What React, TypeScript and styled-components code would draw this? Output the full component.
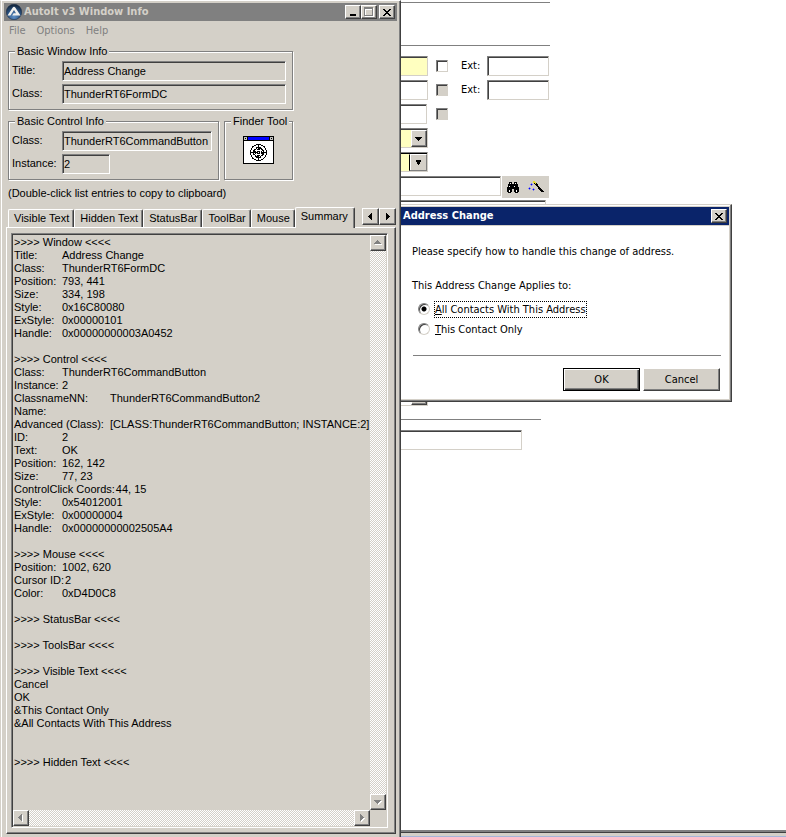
import React from "react";
import styled, { createGlobalStyle, css } from "styled-components";

const face = "#d4d0c8";
const shade = "#808080";
const dark = "#404040";
const sans = '"Liberation Sans", Arial, sans-serif';
const tahoma = '"DejaVu Sans Condensed", Tahoma, sans-serif';

const Global = createGlobalStyle`
  * { box-sizing: border-box; }
  html, body { margin: 0; padding: 0; background: #fff; }
  body, button, input, select, textarea { font: 11px/13px ${sans}; color: #000; }
  button, input, select, textarea, fieldset, legend { margin: 0; padding: 0; border-radius: 0; outline: none; }
  svg { display: block; flex: none; }
`;

const raised = css`
  border: 1px solid;
  border-color: #fff ${dark} ${dark} #fff;
  box-shadow: inset -1px -1px 0 ${shade};
  background: ${face};
`;

const Desktop = styled.div`
  display: grid;
  grid-template-columns: minmax(401px, 51%) minmax(0, 1fr);
  min-height: 100vh;
`;

/* ---------- AutoIt window ---------- */

const ToolWindow = styled.section`
  display: flex;
  flex-direction: column;
  min-width: 0;
  padding: 2px 3px 3px;
  background: ${face};
  border: solid;
  border-width: 1px 1px 0;
  border-color: #fff ${dark} ${face} ${face};
  box-shadow: inset 1px 0 0 #fff, inset -1px 0 0 ${shade};
`;

const TitleBar = styled.header<{ $active?: boolean }>`
  display: flex;
  align-items: center;
  height: 18px;
  padding: 0 2px;
  gap: 2px;
  background: ${(p) => (p.$active ? "#0a246a" : shade)};
  color: ${(p) => (p.$active ? "#fff" : face)};
`;

const TitleText = styled.h1`
  flex: 1;
  margin: 0;
  font: bold 11px/16px ${tahoma};
  white-space: nowrap;
`;

const Caption = styled.div`
  display: flex;
`;

const CaptionButton = styled.button`
  ${raised}
  display: grid;
  place-items: center;
  width: 16px;
  height: 14px;
`;

const MenuBar = styled.nav`
  display: flex;
  gap: 11px;
  height: 20px;
  padding: 0 5px;
`;

const MenuItem = styled.button`
  border: 0;
  background: none;
  color: ${shade};
  font: 11px/20px ${tahoma};
`;

const Groups = styled.div`
  display: grid;
  grid-template-columns: minmax(0, 1fr) 69px;
  gap: 5px;
  width: max(285px, 72%);
  margin: 4px 0 0 4px;
`;

const Group = styled.fieldset<{ $wide?: boolean }>`
  min-width: 0;
  height: 65px;
  border: 1px solid ${shade};
  box-shadow: inset 1px 1px 0 #fff, 1px 1px 0 #fff;
  padding: 3px 6px 0 3px;
  ${(p) => p.$wide && "grid-column: 1 / -1;"}
`;

const Legend = styled.legend`
  height: 13px;
  margin-left: 3px;
  padding: 0 2px;
  background: ${face};
  white-space: nowrap;
`;

const InfoRow = styled.div`
  display: grid;
  grid-template-columns: 50px minmax(0, 1fr);
  margin-bottom: 3px;
`;

const InfoLabel = styled.label`
  line-height: 18px;
`;

const InfoBox = styled.input<{ $short?: boolean }>`
  width: ${(p) => (p.$short ? "48px" : "100%")};
  height: 20px;
  padding: 0 0 0 1px;
  background: ${face};
  border: 1px solid;
  border-color: ${shade} #fff #fff ${shade};
  box-shadow: inset 1px 1px 0 ${dark};
`;

const Finder = styled.div`
  display: flex;
  justify-content: center;
  padding: 5px 0 0 3px;
`;

const Hint = styled.p`
  margin: 7px 4px;
`;

const TabRow = styled.div`
  display: flex;
  align-items: flex-end;
  height: 20px;
  padding: 0 1px 0 4px;
`;

const Tab = styled.button<{ $active?: boolean }>`
  height: 18px;
  padding: 0 4px 0 5px;
  white-space: nowrap;
  background: ${face};
  border: solid;
  border-width: 1px 1px 0;
  border-color: #fff ${dark} #fff #fff;
  border-radius: 2px 2px 0 0;
  box-shadow: inset -1px 0 0 ${shade};
  ${(p) =>
    p.$active &&
    css`
      z-index: 1;
      height: 21px;
      padding: 0 6px 3px 5px;
      margin-bottom: -1px;
    `}
`;

const Spinner = styled.div`
  display: flex;
  align-self: flex-start;
  margin: 1px 0 0 auto;
`;

const SpinButton = styled.button`
  ${raised}
  display: grid;
  place-items: center;
  width: 17px;
  height: 17px;
`;

const Pane = styled.div`
  flex: 1;
  display: flex;
  margin: 0 1px 0 2px;
  padding: 5px 7px 5px 4px;
  border: 1px solid;
  border-color: #fff ${dark} ${dark} #fff;
  box-shadow: inset -1px -1px 0 ${shade};
`;

const Viewer = styled.div`
  flex: 1;
  display: grid;
  grid-template: minmax(0, 1fr) 16px / minmax(0, 1fr) 16px;
  border: 1px solid;
  border-color: ${shade} #fff #fff ${shade};
  box-shadow: inset 1px 1px 0 ${dark};
  padding: 1px;
`;

const Summary = styled.textarea`
  width: 100%;
  min-height: 552px;
  height: 100%;
  padding: 1px 0 0 1px;
  border: 0;
  resize: none;
  overflow: hidden;
  background: transparent;
  white-space: pre;
  tab-size: 48px;
`;

const ScrollTrack = styled.div<{ $vertical?: boolean }>`
  display: flex;
  flex-direction: ${(p) => (p.$vertical ? "column" : "row")};
  justify-content: space-between;
  background: repeating-conic-gradient(#fff 0 25%, ${face} 0 50%) 0 0 / 2px 2px;
`;

const ScrollButton = styled.button`
  ${raised}
  display: grid;
  place-items: center;
  width: 16px;
  height: 16px;
`;

/* ---------- form behind the dialog ---------- */

const Backdrop = styled.main`
  position: relative;
  display: flex;
  flex-direction: column;
  overflow: hidden;
  background: #fff;
`;

const Form = styled.form`
  flex: 1;
  padding-top: 2px;
`;

const Rule = styled.hr<{ $width: number; $after: number }>`
  width: ${(p) => p.$width}px;
  height: 1px;
  margin: 0 0 ${(p) => p.$after}px;
  border: 0;
  background: ${shade};
`;

const Row = styled.div<{ $last?: boolean }>`
  display: flex;
  height: 20px;
  margin-bottom: ${(p) => (p.$last ? 13 : 4)}px;
`;

const Cut = styled.div`
  height: 162px;
`;

const Field = styled.input<{ $width: number; $yellow?: boolean; $whole?: boolean }>`
  width: ${(p) => p.$width}px;
  height: 20px;
  background: ${(p) => (p.$yellow ? "#ffffc0" : "#fff")};
  border: solid;
  border-width: 1px 1px 1px ${(p) => (p.$whole ? "1px" : "0")};
  border-color: ${shade} ${face} ${face} ${shade};
  box-shadow: inset ${(p) => (p.$whole ? "1px" : "0")} 1px 0 ${dark};
`;

const Check = styled.input<{ $gap: number }>`
  appearance: none;
  width: 12px;
  height: 12px;
  margin: 4px 0 0 ${(p) => p.$gap}px;
  background: #fff;
  border: 1px solid;
  border-color: ${shade} ${face} ${face} ${shade};
  box-shadow: inset 1px 1px 0 ${dark};
  &:disabled { background: ${face}; }
`;

const ExtLabel = styled.label`
  display: flex;
  justify-content: space-between;
  width: 88px;
  margin-left: 13px;
  font: 11px/19px ${tahoma};
`;

const Combo = styled.div<{ $flat?: boolean; $plain?: boolean }>`
  display: flex;
  width: 27px;
  height: 20px;
  padding-top: 1px;
  background: ${(p) => (p.$plain ? "#fff" : "#ffffc0")};
  border: solid;
  border-width: 1px 1px 1px 0;
  border-color: ${shade} ${face} ${face};
  box-shadow: inset 0 1px 0 ${(p) => (p.$flat ? "#000" : dark)};
`;

const ComboSelect = styled.select`
  appearance: none;
  flex: 1;
  min-width: 0;
  border: 0;
  background: transparent;
`;

const ComboArrow = styled.span<{ $flat?: boolean }>`
  ${raised}
  display: grid;
  place-items: center;
  width: 16px;
  ${(p) =>
    p.$flat &&
    css`
      width: 18px;
      border-color: #fff ${shade} ${shade} #000;
      box-shadow: inset 1px 0 0 #fff;
    `}
`;

const Tools = styled.div`
  display: flex;
  align-items: center;
  justify-content: space-around;
  width: 47px;
  height: 22px;
  margin-left: 1px;
  background: ${face};
`;

const ToolButton = styled.button`
  border: 0;
  background: none;
`;

const BottomEdge = styled.footer`
  height: 7px;
  border-top: 2px solid ${shade};
  border-bottom: 1px solid #a6b5d8;
  background: ${face};
  box-shadow: inset 0 1px 0 ${dark};
`;

/* ---------- dialog ---------- */

const Dialog = styled.section`
  position: absolute;
  top: 204px;
  left: -3px;
  width: 334px;
  height: 198px;
  padding: 2px;
  background: #fff;
  border: 1px solid;
  border-color: ${face} ${dark} ${dark} ${face};
  box-shadow: inset -1px -1px 0 ${shade}, inset 1px 1px 0 #fff, inset -2px -2px 0 ${face}, inset 2px 2px 0 ${face};
  font-family: ${tahoma};
`;

const DialogBody = styled.div`
  padding: 19px 8px 0 11px;
  border-top: 1px solid ${face};
`;

const Line = styled.p`
  margin: 0 0 21px;
  white-space: nowrap;
`;

const Choices = styled.fieldset`
  border: 0;
  min-width: 0;
`;

const ChoicesLegend = styled.legend`
  margin-bottom: 9px;
`;

const Choice = styled.label`
  display: flex;
  align-items: center;
  gap: 4px;
  height: 17px;
  margin: 0 0 3px 6px;
`;

const Radio = styled.input`
  appearance: none;
  width: 12px;
  height: 12px;
  margin: 0 0 2px;
  border: 1px solid;
  border-color: ${shade} ${face} ${face} ${shade};
  border-radius: 50%;
  box-shadow: inset 1px 1px 0 ${dark};
  &:checked { background: radial-gradient(circle, #000 2px, #fff 3px); }
`;

const ChoiceText = styled.span<{ $focus?: boolean }>`
  padding: 1px 0;
  white-space: nowrap;
  border: 1px dotted ${(p) => (p.$focus ? "#000" : "transparent")};
`;

const Divider = styled.hr`
  height: 1px;
  margin: 14px 0 12px 1px;
  border: 0;
  background: ${shade};
`;

const Actions = styled.div`
  display: flex;
  justify-content: flex-end;
  gap: 3px;
  padding-right: 1px;
`;

const PushButton = styled.button<{ $default?: boolean }>`
  ${raised}
  width: 77px;
  height: 23px;
  font-family: ${tahoma};
  ${(p) =>
    p.$default &&
    css`
      border-color: #000;
      box-shadow: inset 1px 1px 0 #fff, inset -1px -1px 0 ${dark}, inset -2px -2px 0 ${shade};
    `}
`;

const Cross = () => (
  <svg width="8" height="7" viewBox="0 0 8 7" shapeRendering="crispEdges">
    <path d="M0 0h2v1h1v1h2v-1h1v-1h2v1h-1v1h-1v1h-1v1h1v1h1v1h1v1h-2v-1h-1v-1h-2v1h-1v1h-2v-1h1v-1h1v-1h1v-1h-1v-1h-1v-1h-1z" />
  </svg>
);

type Dir = "up" | "down" | "left" | "right";
const arrows: Record<Dir, string> = {
  up: "M3 1h1v1h1v1h1v1h1v1h-7v-1h1v-1h1v-1h1z",
  down: "M0 2h7v1h-1v1h-1v1h-1v1h-1v-1h-1v-1h-1v-1h-1z",
  left: "M4 0h1v7h-1v-1h-1v-1h-1v-1h-1v-1h1v-1h1v-1h1z",
  right: "M2 0h1v1h1v1h1v1h1v1h-1v1h-1v1h-1v1h-1z",
};

const Arrow = ({ dir, disabled }: { dir: Dir; disabled?: boolean }) => (
  <svg width="8" height="8" viewBox="0 0 8 8" shapeRendering="crispEdges">
    {disabled && <path d={arrows[dir]} fill="#fff" transform="translate(1 1)" />}
    <path d={arrows[dir]} fill={disabled ? shade : "#000"} />
  </svg>
);

const AppIcon = () => (
  <svg width="16" height="16" viewBox="0 0 16 16">
    <defs>
      <radialGradient id="orb" cx="50%" cy="80%" r="75%">
        <stop offset="0" stopColor="#5f91c8" />
        <stop offset="0.6" stopColor="#29517f" />
        <stop offset="1" stopColor="#14263c" />
      </radialGradient>
    </defs>
    <circle cx="8" cy="8" r="7.7" fill="url(#orb)" stroke="#1b2f49" strokeWidth="0.6" />
    <path d="M1.5 11.5L6.6 3.7Q8 2 9.4 3.7L14.5 11.5H6.2L7.6 9.3H10L8 6.1L4.4 11.5z" fill="#f1f1ee" />
  </svg>
);

const FinderIcon = () => (
  <svg width="31" height="28" viewBox="0 0 31 28" shapeRendering="crispEdges">
    <path d="M0 0h31v28h-31z" />
    <path d="M1 5h29v22h-29z" fill="#fff" />
    <path d="M5 1h21v3h-21z" fill="#00f" />
    <path d="M1 1h3v3h-3zM27 1h3v3h-3z" fill="#c0c0c0" />
    <path d="M2 2h1v1h-1zM28 2h1v1h-1z" />
    <g fill="none" stroke="#000">
      <circle cx="15.5" cy="16.5" r="8" />
      <circle cx="15.5" cy="16.5" r="4.5" strokeDasharray="5 2" />
      <circle cx="15.5" cy="16.5" r="1.5" />
      <path d="M7 16.5h6M18 16.5h6M15.5 8v6M15.5 19v6M10.5 14v5M12.5 15v3M18.5 15v3M20.5 14v5M13 11.5h5M14 13.5h3M14 19.5h3M13 21.5h5" />
    </g>
  </svg>
);

const Binoculars = () => (
  <svg width="12" height="11" viewBox="0 0 12 11" shapeRendering="crispEdges">
    <path d="M2 0h3v2h2v-2h3v2h1v3h1v5h-1v1h-3v-1h-1v-3h-2v3h-1v1h-3v-1h-1v-5h1v-3h1z" />
    <path d="M3 1h1v1h-1zM8 1h1v1h-1zM2 4h1v1h-1zM7 4h1v1h-1zM2 8h1v2h-1zM9 8h1v2h-1z" fill="#fff" />
  </svg>
);

const Wand = () => (
  <svg width="16" height="12" viewBox="0 0 16 12" shapeRendering="crispEdges">
    <path d="M6 1l9 10" stroke="#000" strokeWidth="2" />
    <path d="M5 0h2v1h1v2h-1v-1h-2z" fill="#e6dc32" />
    <path d="M3 2h1v1h1v1h-1v1h-1v-1h-1v-1h1zM1 6h1v1h1v1h-1v1h-1v-1h-1v-1h1zM5 7h1v1h1v1h-1v1h-1v-1h-1v-1h1z" fill="#8080e8" />
    <path d="M3 3h1v1h-1zM1 7h1v1h-1zM5 8h1v1h-1z" fill="#00f" />
  </svg>
);

const summary = [
  ">>>> Window <<<<",
  "Title:\tAddress Change",
  "Class:\tThunderRT6FormDC",
  "Position:\t793, 441",
  "Size:\t334, 198",
  "Style:\t0x16C80080",
  "ExStyle:\t0x00000101",
  "Handle:\t0x00000000003A0452",
  "",
  ">>>> Control <<<<",
  "Class:\tThunderRT6CommandButton",
  "Instance:\t2",
  "ClassnameNN:\tThunderRT6CommandButton2",
  "Name:",
  "Advanced (Class):\t[CLASS:ThunderRT6CommandButton; INSTANCE:2]",
  "ID:\t2",
  "Text:\tOK",
  "Position:\t162, 142",
  "Size:\t77, 23",
  "ControlClick Coords:\u200a44, 15",
  "Style:\t0x54012001",
  "ExStyle:\t0x00000004",
  "Handle:\t0x00000000002505A4",
  "",
  ">>>> Mouse <<<<",
  "Position:\t1002, 620",
  "Cursor ID:\u200a2",
  "Color:\t0xD4D0C8",
  "",
  ">>>> StatusBar <<<<",
  "",
  ">>>> ToolsBar <<<<",
  "",
  ">>>> Visible Text <<<<",
  "Cancel",
  "OK",
  "&This Contact Only",
  "&All Contacts With This Address",
  "",
  "",
  ">>>> Hidden Text <<<<",
].join("\n");

const tabs = ["Visible Text", "Hidden Text", "StatusBar", "ToolBar", "Mouse", "Summary"];

const InfoField = ({ id, label, value, short }: { id: string; label: string; value: string; short?: boolean }) => (
  <InfoRow>
    <InfoLabel htmlFor={id}>{label}</InfoLabel>
    <InfoBox id={id} $short={short} readOnly value={value} />
  </InfoRow>
);

const AutoItWindow = () => (
  <ToolWindow aria-label="AutoIt v3 Window Info">
    <TitleBar>
      <AppIcon />
      <TitleText>AutoIt v3 Window Info</TitleText>
      <Caption>
        <CaptionButton aria-label="Minimize">
          <svg width="8" height="8" viewBox="0 0 8 8"><path d="M1 6h6v2h-6z" /></svg>
        </CaptionButton>
        <CaptionButton aria-label="Maximize" disabled>
          <svg width="10" height="10" viewBox="0 0 10 10" shapeRendering="crispEdges">
            <path d="M1 1h9v9h-9zM2 3v6h7v-6z" fill="#fff" fillRule="evenodd" />
            <path d="M0 0h9v9h-9zM1 2v6h7v-6z" fill={shade} fillRule="evenodd" />
          </svg>
        </CaptionButton>
      </Caption>
      <CaptionButton aria-label="Close"><Cross /></CaptionButton>
    </TitleBar>
    <MenuBar>
      {["File", "Options", "Help"].map((m) => <MenuItem key={m}>{m}</MenuItem>)}
    </MenuBar>
    <Groups>
      <Group $wide>
        <Legend>Basic Window Info</Legend>
        <InfoField id="win-title" label="Title:" value="Address Change" />
        <InfoField id="win-class" label="Class:" value="ThunderRT6FormDC" />
      </Group>
      <Group>
        <Legend>Basic Control Info</Legend>
        <InfoField id="ctl-class" label="Class:" value="ThunderRT6CommandButton" />
        <InfoField id="ctl-instance" label="Instance:" value="2" short />
      </Group>
      <Group>
        <Legend>Finder Tool</Legend>
        <Finder><FinderIcon /></Finder>
      </Group>
    </Groups>
    <Hint>(Double-click list entries to copy to clipboard)</Hint>
    <TabRow role="tablist">
      {tabs.map((t) => (
        <Tab key={t} role="tab" aria-selected={t === "Summary"} $active={t === "Summary"}>{t}</Tab>
      ))}
      <Spinner>
        <SpinButton aria-label="Previous tabs"><Arrow dir="left" /></SpinButton>
        <SpinButton aria-label="Next tabs"><Arrow dir="right" /></SpinButton>
      </Spinner>
    </TabRow>
    <Pane role="tabpanel">
      <Viewer>
        <Summary aria-label="Summary" readOnly spellCheck={false} value={summary} />
        <ScrollTrack $vertical>
          <ScrollButton aria-label="Scroll up"><Arrow dir="up" disabled /></ScrollButton>
          <ScrollButton aria-label="Scroll down"><Arrow dir="down" disabled /></ScrollButton>
        </ScrollTrack>
        <ScrollTrack>
          <ScrollButton aria-label="Scroll left"><Arrow dir="left" disabled /></ScrollButton>
          <ScrollButton aria-label="Scroll right"><Arrow dir="right" disabled /></ScrollButton>
        </ScrollTrack>
      </Viewer>
    </Pane>
  </ToolWindow>
);

const ComboBox = ({ label, flat, plain }: { label: string; flat?: boolean; plain?: boolean }) => (
  <Combo $flat={flat} $plain={plain}>
    <ComboSelect aria-label={label} />
    <ComboArrow $flat={flat}>
      {flat ? (
        <svg width="5" height="5" viewBox="0 0 5 5" shapeRendering="crispEdges"><path d="M0 0h5v2h-1v2h-1v1h-1v-1h-1v-2h-1z" /></svg>
      ) : (
        <Arrow dir="down" />
      )}
    </ComboArrow>
  </Combo>
);

const ContactForm = () => (
  <Form>
    <Rule $width={149} $after={42} />
    <Rule $width={149} $after={10} />
    <Row>
      <Field aria-label="Phone 1" $width={27} $yellow />
      <Check type="checkbox" aria-label="Phone 1 flag" $gap={8} />
      <ExtLabel>Ext:<Field $width={62} $whole /></ExtLabel>
    </Row>
    <Row>
      <Field aria-label="Phone 2" $width={27} />
      <Check type="checkbox" aria-label="Phone 2 flag" $gap={8} disabled />
      <ExtLabel>Ext:<Field $width={62} $whole /></ExtLabel>
    </Row>
    <Row>
      <Field aria-label="Fax" $width={26} />
      <Check type="checkbox" aria-label="Fax flag" $gap={9} disabled />
    </Row>
    <Row><ComboBox label="Type" /></Row>
    <Row><ComboBox label="Status" flat /></Row>
    <Row>
      <Field aria-label="Lookup" $width={100} />
      <Tools>
        <ToolButton type="button" aria-label="Find"><Binoculars /></ToolButton>
        <ToolButton type="button" aria-label="Wizard"><Wand /></ToolButton>
      </Tools>
    </Row>
    <Row><Field aria-label="Address" $width={145} /></Row>
    <Cut />
    <Row $last><ComboBox label="Region" plain /></Row>
    <Rule $width={140} $after={10} />
    <Field aria-label="Notes" $width={121} />
  </Form>
);

const AddressDialog = () => (
  <Dialog role="dialog" aria-label="Address Change">
    <TitleBar $active>
      <TitleText>Address Change</TitleText>
      <CaptionButton aria-label="Close"><Cross /></CaptionButton>
    </TitleBar>
    <DialogBody>
      <Line>Please specify how to handle this change of address.</Line>
      <Choices>
        <ChoicesLegend>This Address Change Applies to:</ChoicesLegend>
        <Choice>
          <Radio type="radio" name="scope" defaultChecked />
          <ChoiceText $focus><u>A</u>ll Contacts With This Address</ChoiceText>
        </Choice>
        <Choice>
          <Radio type="radio" name="scope" />
          <ChoiceText><u>T</u>his Contact Only</ChoiceText>
        </Choice>
      </Choices>
      <Divider />
      <Actions>
        <PushButton $default>OK</PushButton>
        <PushButton>Cancel</PushButton>
      </Actions>
    </DialogBody>
  </Dialog>
);

export default function App() {
  return (
    <Desktop>
      <Global />
      <AutoItWindow />
      <Backdrop>
        <ContactForm />
        <BottomEdge />
        <AddressDialog />
      </Backdrop>
    </Desktop>
  );
}
